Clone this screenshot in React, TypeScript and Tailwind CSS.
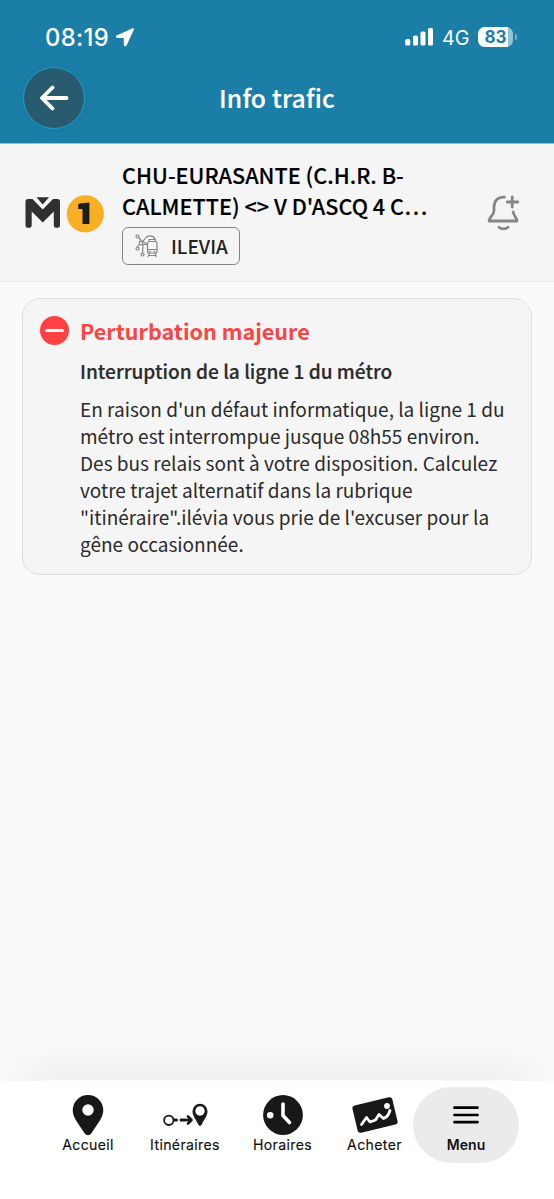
import { clsx } from "clsx";
import type { ReactNode } from "react";

const StatusBar = () => {
  return (
    <div className="flex h-[67px] items-start text-white">
      <span className="ml-[45px] mt-[22px] w-[65px] font-['Inter'] text-[23.800px] font-medium leading-[32px] tracking-[0.300px]">08:19</span>
      <svg className="ml-[5px] mt-[28px]" width="20" height="19" viewBox="0 0 20 19" fill="currentColor" stroke="currentColor" strokeWidth="2" strokeLinejoin="round">
        <path d="M18 1.200 2 8.300 2.200 9H9.800V17L10.500 17.300Z" />
      </svg>
      <div className="ml-auto mr-[37px] flex items-start">
        <svg className="mt-[27px]" width="29" height="19" viewBox="0 0 29 19" fill="currentColor">
          <rect x="0.200" y="12" width="5" height="6.500" rx="1.500" />
          <rect x="8" y="8.500" width="5" height="10" rx="1.500" />
          <rect x="15.500" y="4.500" width="5" height="14" rx="1.500" />
          <rect x="23" y="1" width="5" height="17.500" rx="1.500" />
        </svg>
        <span className="ml-[8px] mt-[22px] w-[27px] font-['Inter'] text-[19.800px] leading-[32px]">4G</span>
        <div className="ml-[9px] mt-[27px] flex items-center">
          <div className="flex h-[20px] w-[35px] items-center justify-center overflow-hidden rounded-[6.500px] bg-[linear-gradient(90deg,#fff_30px,#94c3d8_30px)]">
            <span className="font-['Inter'] text-[17px] font-bold leading-none text-[#1a7ea7]">83</span>
          </div>
          <span className="ml-[2px] h-[6px] w-[2px] rounded-r-full bg-[#79b3cc]" />
        </div>
      </div>
    </div>
  );
};

const Header = () => {
  return (
    <header className="h-[144px] border-b border-[#8fc3d8] bg-[#1a7ea7]">
      <StatusBar />
      <div className="grid grid-cols-[62px_1fr_62px] items-center px-[23px]">
        <button className="flex size-[62px] items-center justify-center rounded-full border border-[#219dc9] bg-[#285b70] shadow-[0_0_24px_rgba(0,40,60,0.04)]">
          <svg width="30" height="26" viewBox="0 0 30 26" fill="none" stroke="#fff" strokeWidth="3.800" strokeLinecap="round" strokeLinejoin="round">
            <path d="M13.500 2.500 3 13l10.500 10.500M3.500 13H27.500" />
          </svg>
        </button>
        <h1 className="pb-[2px] text-center text-[24.700px] font-medium leading-[32px] tracking-[0.200px] text-white [-webkit-text-stroke:0.200px_white]">Info trafic</h1>
      </div>
    </header>
  );
};

const MetroLogo = () => {
  return (
    <svg className="shrink-0 overflow-visible" width="80" height="40" viewBox="0 0 80 40">
      <path d="M0.500 28.500V4.500Q0.500 2 3 2H7.500L17.700 12.500 28 2H32.500Q35 2 35 4.500V28.500Q35 30.700 32.800 30.700H31Q28.800 30.700 28.800 28.500V14.500L17.700 25.500 6.700 14.500V28.500Q6.700 30.700 4.500 30.700H2.700Q0.500 30.700 0.500 28.500Z" fill="#303030" />
      <path d="M11.500 0.200H24L17.700 7.500Z" fill="#303030" />
      <circle cx="60.300" cy="16.800" r="18.600" fill="#f9af25" />
      <path d="M54.500 6.500 64.400 5.500V27H57.500V12H53.200V7.500Z" fill="#1d1d1b" />
    </svg>
  );
};

const NetworkIcon = () => {
  return (
    <svg width="24" height="24" viewBox="0 0 24 24" fill="none" stroke="#858585" strokeWidth="1.200">
      <circle cx="2.500" cy="2.500" r="1.500" />
      <circle cx="2.500" cy="14.500" r="1.500" />
      <circle cx="7.500" cy="20.500" r="1.500" />
      <circle cx="6" cy="9" r="1.800" />
      <path d="m3.500 3.500 4 4.500 3-4C13 .800 19 1 20 5.500M7.500 10.500h4M4.800 10.200C2.800 11.500 2.500 12.300 2.500 13M8 10.500l-.5 8.500M8 7.800l4.500 2.500" />
      <rect x="12.500" y="7.500" width="9.500" height="11.500" rx="2" />
      <path d="M12.500 15.500H22M14 7V5.500h6.500V7M14.500 19l-1.500 4M20 19l1.500 4M14 21.500h7M14.500 17.300h1.500M18.500 17.300H20" />
    </svg>
  );
};

const LineBanner = () => {
  return (
    <section className="flex h-[138px] border-b border-[#ebebeb] bg-[#f5f5f5]">
      <div className="ml-[25px] mt-[53px] w-[97px]">
        <MetroLogo />
      </div>
      <div className="w-[340px] pt-[15px]">
        <h2 className="whitespace-nowrap text-[21.650px] font-medium leading-[31px] text-black [-webkit-text-stroke:0.150px_black]">
          CHU-EURASANTE (C.H.R. B-
          <br />
          CALMETTE) &lt;&gt; V D'ASCQ 4 C…
        </h2>
        <div className="mt-[6px] flex h-[38px] w-[118px] items-center rounded-[6px] border-[1.500px] border-[#858585] pl-[12px]">
          <NetworkIcon />
          <span className="ml-[12px] -mt-px text-[19px] font-medium leading-[28px] text-[#222]">ILEVIA</span>
        </div>
      </div>
      <svg className="ml-[25px] mt-[51px]" width="33" height="36" viewBox="0 0 33 36" fill="none" stroke="#868686" strokeWidth="2.800" strokeLinecap="round" strokeLinejoin="round">
        <path d="M17.500 2.100C11 1.500 7 6 7 12V15.500C7 20.500 2 22 2 26H30C29.800 22.500 26.500 20.500 26.200 17" />
        <path d="M25.200 2V12M20.200 7H30.800M12 32.200C14 34.500 19 34.500 21 32.200" />
      </svg>
    </section>
  );
};

const AlertCard = () => {
  return (
    <article className="mx-[22px] mt-[16px] flex h-[277px] rounded-[18px] border-[1.500px] border-[#dfdfdf] bg-[#f5f5f5] pl-[17px] pt-[16px]">
      <div className="mt-px flex size-[29px] shrink-0 items-center justify-center rounded-full bg-[#ff4141]">
        <span className="h-[3px] w-[19px] rounded-full bg-white" />
      </div>
      <div className="ml-[11px] whitespace-nowrap text-[#2b2b2b]">
        <h3 className="text-[21.550px] font-bold leading-[32px] text-[#fa4545]">Perturbation majeure</h3>
        <h4 className="mt-[9px] text-[19.130px] font-medium leading-[30px] [-webkit-text-stroke:0.200px_#2b2b2b]">Interruption de la ligne 1 du métro</h4>
        <p className="mt-[10px] text-[19.050px] leading-[26.900px]">
          En raison d'un défaut informatique, la ligne 1 du
          <br />
          métro est interrompue jusque 08h55 environ.
          <br />
          Des bus relais sont à votre disposition. Calculez
          <br />
          votre trajet alternatif dans la rubrique
          <br />
          "itinéraire".ilévia vous prie de l'excuser pour la
          <br />
          gêne occasionnée.
        </p>
      </div>
    </article>
  );
};

const PinIcon = () => (
  <svg width="32" height="42" viewBox="0 0 32 42">
    <path fillRule="evenodd" fill="#181818" d="M16 1A15.300 15.300 0 0 0 .700 16.300C.700 24 7.500 31 12.600 39.200 14.300 41.800 17.700 41.800 19.400 39.200 24.500 31 31.300 24 31.300 16.300A15.300 15.300 0 0 0 16 1ZM16 10.300A5.700 5.700 0 1 1 16 21.700 5.700 5.700 0 0 1 16 10.300Z" />
  </svg>
);

const RouteIcon = () => (
  <svg width="46" height="42" viewBox="0 0 46 42" fill="none" stroke="#181818" strokeLinecap="round">
    <circle cx="6.800" cy="26.300" r="4.700" strokeWidth="1.800" />
    <path d="M12.500 26H14.500M19 26H23" strokeWidth="3" />
    <path d="m26 22.500 3.500 3.500-3.500 3.500M24 26H29" strokeWidth="2.600" strokeLinejoin="round" />
    <path d="M38 9.800A7.500 7.500 0 0 0 30.500 17.300C30.500 22 34 25.500 36.300 30.500 37.200 32.400 38.800 32.400 39.700 30.500 42 25.500 45.500 22 45.500 17.300A7.500 7.500 0 0 0 38 9.800Z" fill="#181818" stroke="none" />
    <circle cx="38" cy="17" r="4.700" fill="#fff" stroke="none" />
  </svg>
);

const ClockIcon = () => (
  <svg width="40" height="42" viewBox="0 0 40 42">
    <circle cx="20" cy="21" r="19.900" fill="#181818" />
    <circle cx="7.200" cy="21.200" r="3.300" fill="#fff" />
    <path d="M20 10V21.500L26.500 28.500" fill="none" stroke="#fff" strokeWidth="3.600" strokeLinecap="round" strokeLinejoin="round" />
  </svg>
);

const TicketIcon = () => (
  <svg width="46" height="42" viewBox="0 0 46 42">
    <rect x="2.500" y="7" width="41" height="28" rx="3" fill="#181818" transform="rotate(-13.500 23 21)" />
    <path d="M9.500 30.500 14.500 23.500 18 28 23.500 26 27 20.500 31.500 24.500C34.500 23.500 37 20 38 16.500" fill="none" stroke="#fff" strokeWidth="2.800" strokeLinecap="round" strokeLinejoin="round" />
    <circle cx="35" cy="12" r="2.900" fill="#fff" />
  </svg>
);

const MenuIcon = () => (
  <svg width="26" height="42" viewBox="0 0 26 42" stroke="#000" strokeWidth="2.700" strokeLinecap="round">
    <path d="M1.500 13.700H24.500M1.500 21H24.500M1.500 28.200H24.500" />
  </svg>
);

type NavItemProps = {
  label: string;
  icon: ReactNode;
  className: string;
  active?: boolean;
};

const NavItem = ({ label, icon, className, active }: NavItemProps) => {
  return (
    <a
      className={clsx(
        "flex h-[76px] flex-col items-center pt-[7px] font-['Inter'] leading-[20px] text-[#111]",
        active
          ? "rounded-full bg-[#ebebeb] text-[14px] font-semibold tracking-[0.100px]"
          : "text-[14.100px] font-normal tracking-[0.350px] [-webkit-text-stroke:0.150px_#111]",
        className
      )}
    >
      {icon}
      <span className="-mt-px">{label}</span>
    </a>
  );
};

const BottomNav = () => {
  return (
    <nav className="flex h-[118px] bg-white pl-[35px] pt-[6px]">
      <NavItem label="Accueil" icon={<PinIcon />} className="w-[106px]" />
      <NavItem label="Itinéraires" icon={<RouteIcon />} className="w-[88px]" />
      <NavItem label="Horaires" icon={<ClockIcon />} className="w-[107px]" />
      <NavItem label="Acheter" icon={<TicketIcon />} className="w-[77px]" />
      <NavItem label="Menu" icon={<MenuIcon />} className="w-[106px]" active />
    </nav>
  );
};

export default function App() {
  return (
    <div className="flex h-[1199px] w-[554px] flex-col overflow-hidden bg-[#fafafa] font-['Noto_Sans_CJK_SC','Noto_Sans',sans-serif]">
      <Header />
      <LineBanner />
      <main className="flex flex-1 flex-col overflow-hidden">
        <AlertCard />
        {/* soft shadow cast upwards by the tab bar */}
        <div className="mx-[42px] mt-auto h-px shadow-[0_8px_44px_16px_rgba(0,0,0,0.080)]" />
      </main>
      <BottomNav />
    </div>
  );
}
